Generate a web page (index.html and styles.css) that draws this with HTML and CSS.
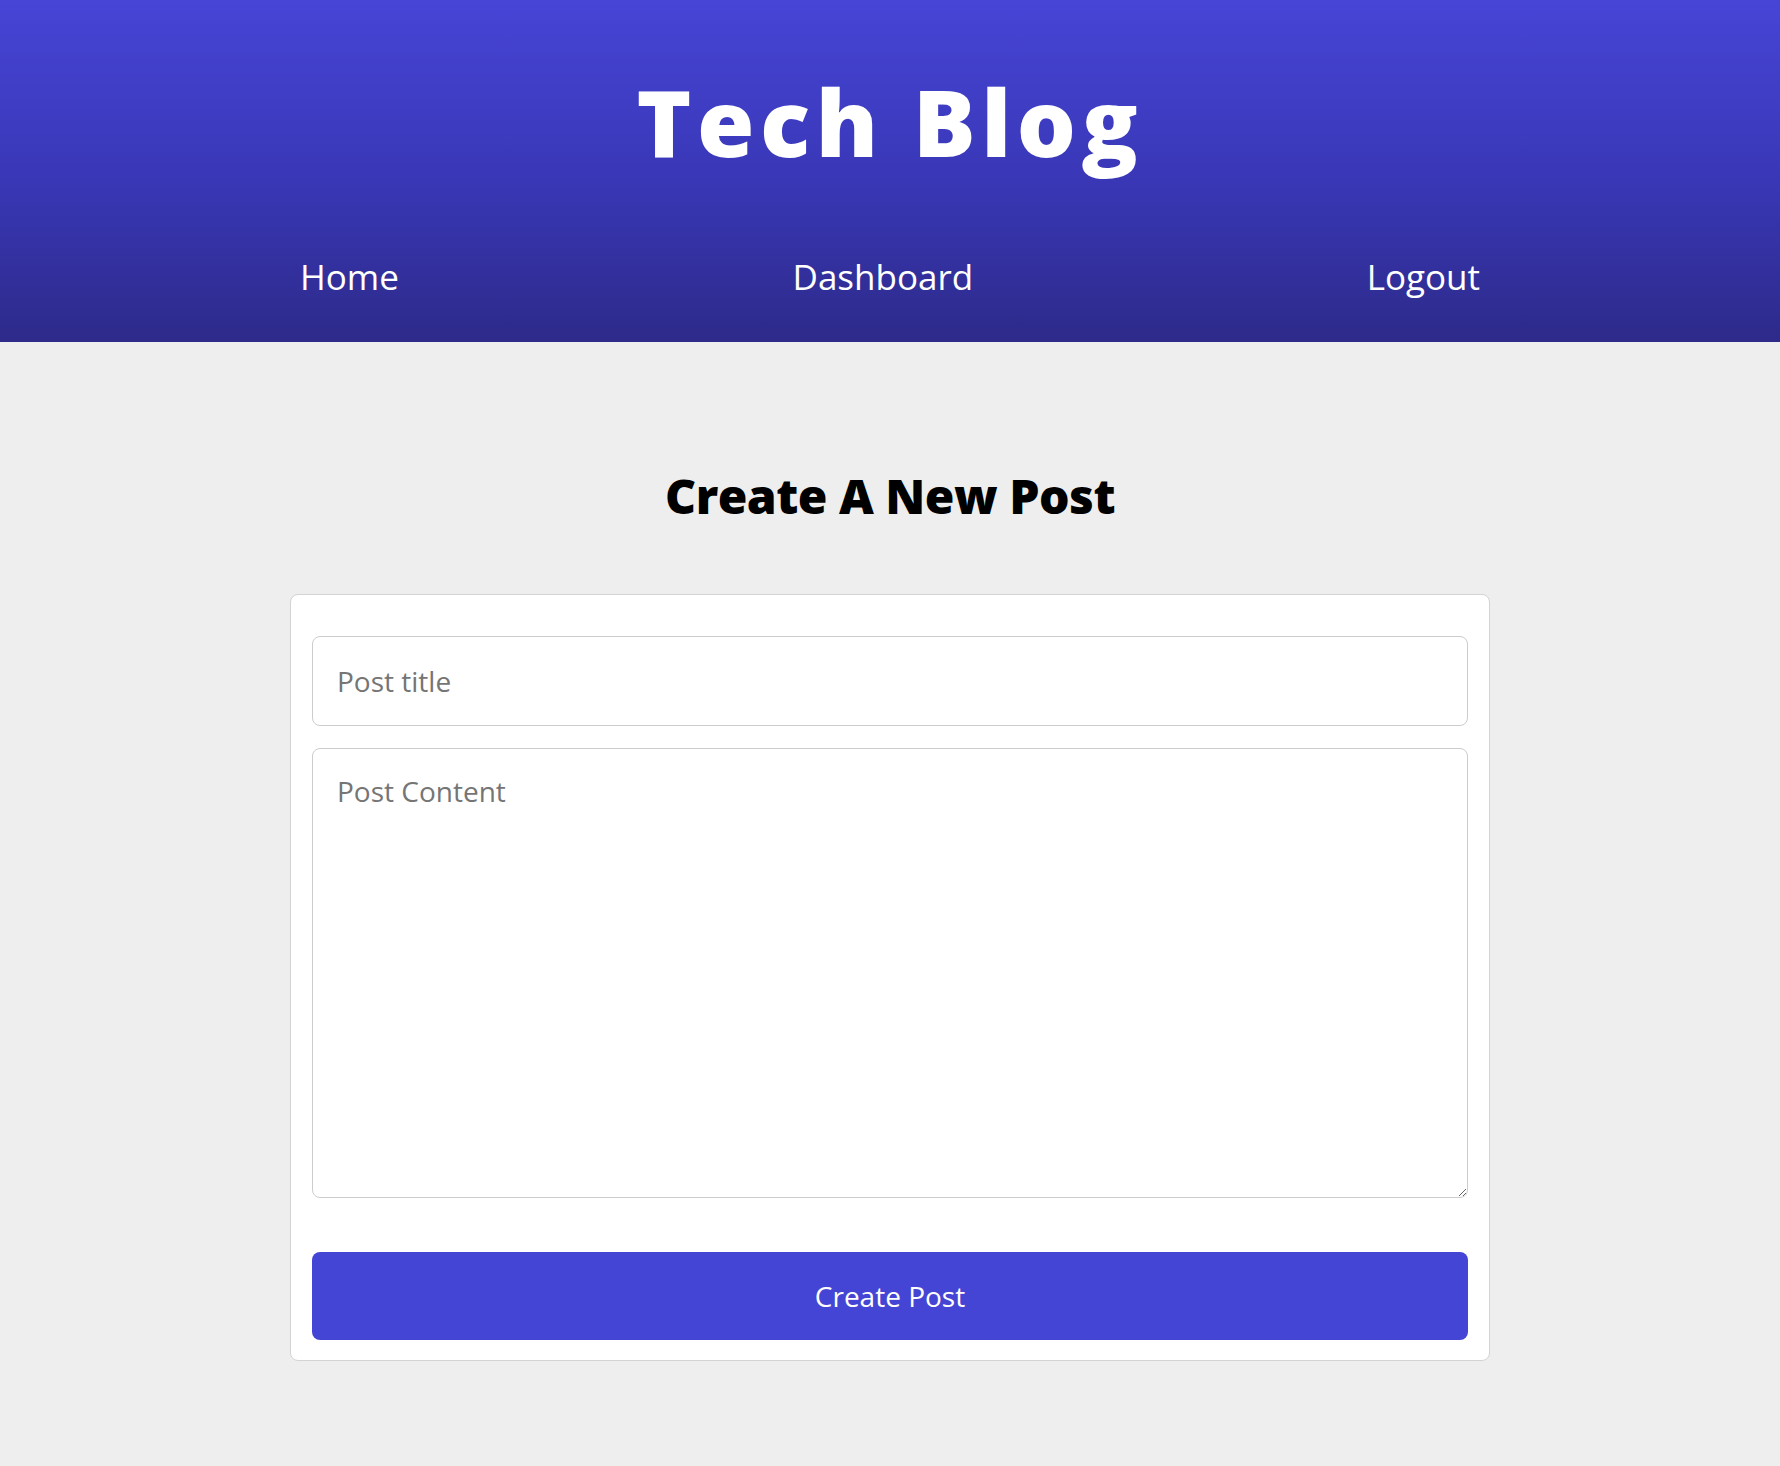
FILE: index.html
```html
<!DOCTYPE html>
<html lang="en">
<head>
<meta charset="utf-8">
<title>Tech Blog</title>
<link rel="stylesheet" href="styles.css">
</head>
<body>
<header class="site-header">
  <h1 class="site-title">Tech Blog</h1>
  <nav class="site-nav">
    <a class="nav-link" href="#">Home</a>
    <a class="nav-link" href="#">Dashboard</a>
    <a class="nav-link" href="#">Logout</a>
  </nav>
</header>
<main class="main">
  <h2 class="page-title">Create A New Post</h2>
  <form class="post-card">
    <input class="field field-title" type="text" placeholder="Post title">
    <textarea class="field field-content" placeholder="Post Content"></textarea>
    <button class="submit-btn" type="button">Create Post</button>
  </form>
</main>
</body>
</html>
```
FILE: styles.css
```css
* { box-sizing: border-box; }
html, body { margin: 0; padding: 0; }
body {
  background: #eeeeee;
  font-family: "Open Sans", "Liberation Sans", sans-serif;
  min-height: 1466px;
}
.site-header {
  background: linear-gradient(to bottom, #4645d6 0%, #3a38b8 50%, #2d2a8a 100%);
  padding: 67px 0 41px;
  color: #fff;
}
.site-title {
  margin: 0;
  text-align: center;
  font-size: 93px;
  line-height: 109px;
  font-weight: 800;
  letter-spacing: 5.5px;
}
.site-nav {
  margin-top: 77px;
  display: flex;
  justify-content: space-between;
  padding: 0 300px;
  line-height: 48px;
}
.nav-link {
  color: #fff;
  text-decoration: none;
  font-size: 35px;
}
.main {
  padding-top: 125px;
}
.page-title {
  margin: 0;
  text-align: center;
  font-size: 48px;
  line-height: 58px;
  font-weight: 800;
  letter-spacing: -0.5px;
  color: #000;
}
.post-card {
  width: 1200px;
  margin: 69px auto 0;
  background: #fff;
  border: 1px solid #d3d3d3;
  border-radius: 8px;
  padding: 41px 21px 20px;
  display: flex;
  flex-direction: column;
}
.field {
  display: block;
  width: 100%;
  border: 1px solid #cccccc;
  border-radius: 8px;
  font-family: "Open Sans", "Liberation Sans", sans-serif;
  font-size: 28px;
  color: #333;
  background: #fff;
  padding: 0 24px;
  outline: none;
}
.field::placeholder { color: #757575; }
.field-title {
  height: 90px;
}
.field-content {
  margin-top: 22px;
  height: 450px;
  padding: 23px 24px 24px;
  line-height: 1.36;
  resize: vertical;
}
.submit-btn {
  margin-top: 54px;
  height: 88px;
  width: 100%;
  border: none;
  border-radius: 8px;
  background: #4545d5;
  color: #fff;
  font-family: "Open Sans", "Liberation Sans", sans-serif;
  font-size: 28px;
  cursor: pointer;
}
```
